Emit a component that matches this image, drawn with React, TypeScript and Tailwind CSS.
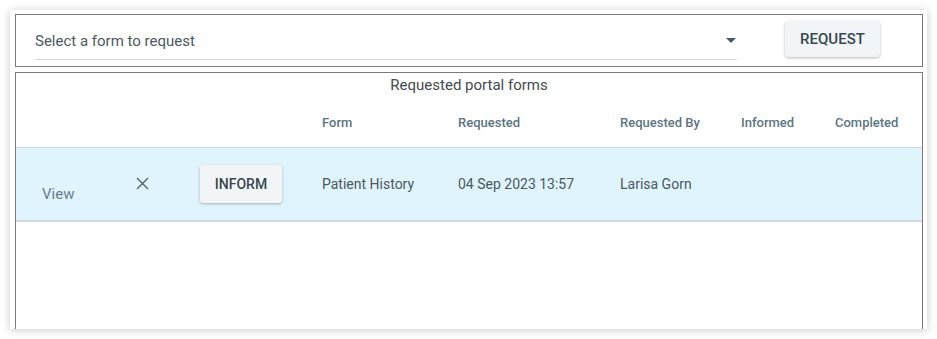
import React from "react";

const cols = "grid grid-cols-[94px_64px_122px_136px_162px_121px_94px_1fr] pl-[26px]";

export default function App() {
  return (
    <div className="w-[937px] h-[339px] bg-white p-[10px] font-['Roboto',sans-serif]">
      <div className="w-[917px] h-[319px] overflow-hidden bg-white shadow-[0_1px_8px_rgba(0,0,0,0.22)] pl-[5px] pr-[4px] pt-[4px]">
        {/* request bar */}
        <div className="h-[53px] border border-[#7a7a7a] flex items-start pl-[19px]">
          <div className="mt-[17px] w-[702px] h-[28px] border-b border-[#cfd8dc] flex items-start justify-between">
            <span className="text-[15px] leading-[18px] text-[#4b5960]">Select a form to request</span>
            <svg width="10" height="5" viewBox="0 0 10 5" className="mt-[6px] mr-[1px]">
              <path d="M0 0 L10 0 L5 5 Z" fill="#455a64" />
            </svg>
          </div>
          <button className="ml-[48px] mt-[6px] w-[95px] h-[36px] rounded-[4px] bg-[#f2f5f7] shadow-[0_1px_3px_rgba(0,0,0,0.28)] text-[15px] font-medium text-[#37474f] leading-none">
            REQUEST
          </button>
        </div>

        {/* table */}
        <div className="mt-[5px] h-[300px] border border-[#7a7a7a]">
          <div className="pt-[3px] text-center text-[15px] leading-[18px] text-[#444b4f]">
            Requested portal forms
          </div>
          <div className={`${cols} h-[54px] pt-[5px] items-center border-b border-[#cfd8dc] text-[13px] font-medium text-[#5b7582]`}>
            <div />
            <div />
            <div />
            <div>Form</div>
            <div>Requested</div>
            <div>Requested By</div>
            <div>Informed</div>
            <div>Completed</div>
          </div>
          <div className={`${cols} h-[74px] items-center bg-[#e0f4fd] border-b-2 border-[#cdd9de] text-[14px] text-[#4c585e]`}>
            <div className="mt-[20px] text-[15px] text-[#657f8c]">View</div>
            <div className="-mt-[2px]">
              <svg width="13" height="13" viewBox="0 0 13 13">
                <path d="M1 1 L12 12 M12 1 L1 12" stroke="#546169" strokeWidth="1.4" fill="none" />
              </svg>
            </div>
            <div>
              <button className="w-[82px] h-[38px] rounded-[3px] bg-[#f2f5f7] shadow-[0_1px_3px_rgba(0,0,0,0.28)] text-[14px] font-medium text-[#37474f] leading-none">
                INFORM
              </button>
            </div>
            <div>Patient History</div>
            <div>04 Sep 2023 13:57</div>
            <div>Larisa Gorn</div>
            <div />
            <div />
          </div>
        </div>
      </div>
    </div>
  );
}
